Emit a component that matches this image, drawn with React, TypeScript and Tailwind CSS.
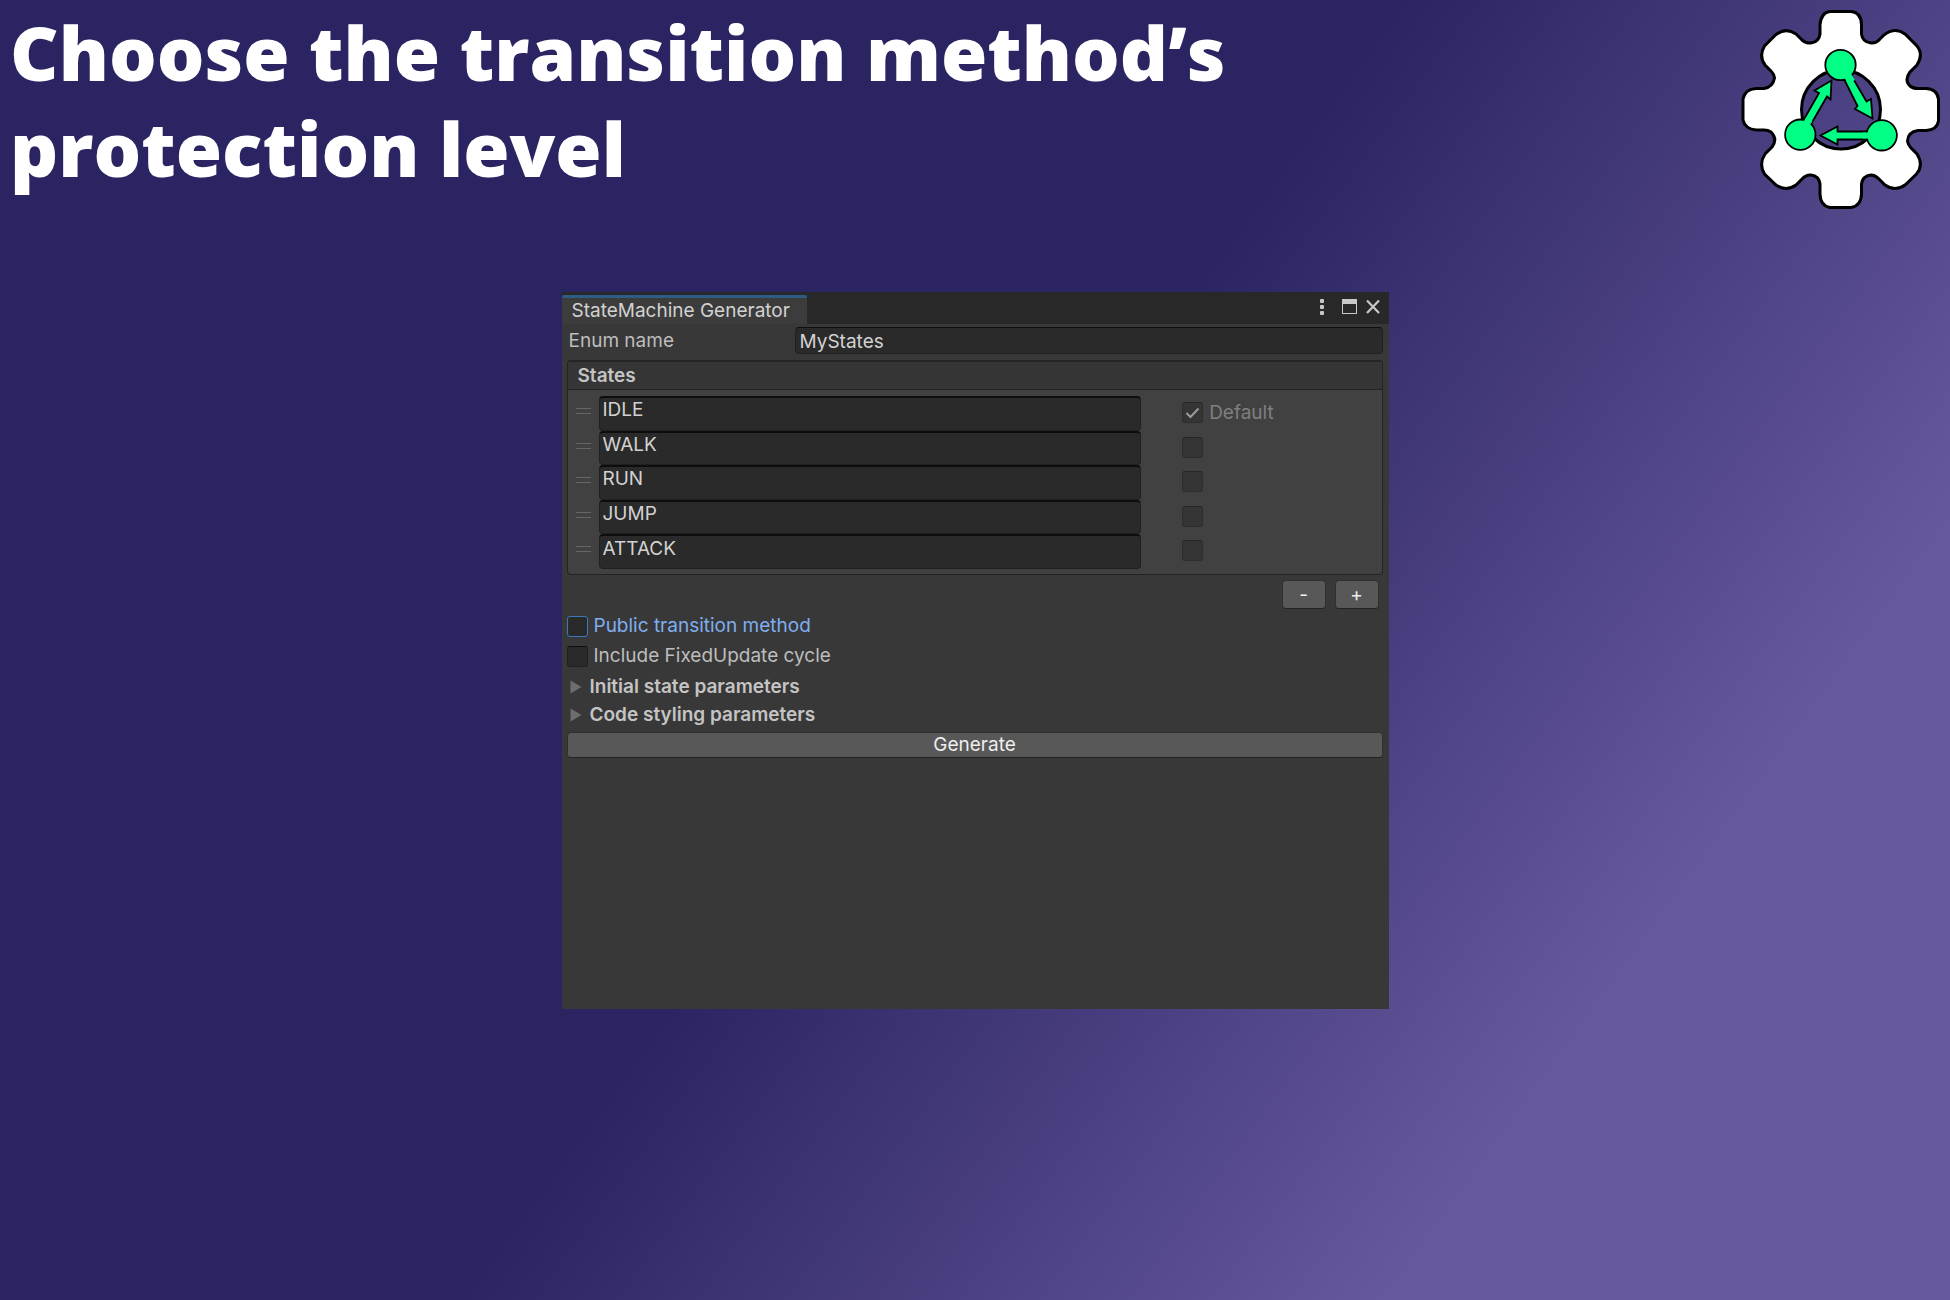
const STATES = ["IDLE", "WALK", "RUN", "JUMP", "ATTACK"];

function GearLogo() {
  return (
    <svg viewBox="0 0 220 220" className="h-[220px] w-[220px] shrink-0" aria-label="State machine gear logo" role="img">
      <path
        fill="#fff"
        stroke="#000"
        strokeWidth="3"
        fillRule="evenodd"
        d="M100 11.500H121Q131.500 12.500 131.500 25V34Q132.500 42 141 43Q146 43.500 150 39L154 35Q165 26.500 175 34L186.500 45.500Q194 54 187 65L180 72Q174 80 180 86Q183 88.500 188 88.500H196Q207 89 208.500 99V121Q207 130 196 130.500H188Q178 132 177.500 141Q178 145 181 148L187 154Q194 165 186.500 174L175 185Q165 192 155 185L149 179Q145 175 141 175Q132.500 176 131.500 184V194Q131 206 121 207.500H100Q90.500 206 90 194V184Q89 176 81 175Q76 174.500 72 179L66 185Q56 192 46 185L34.500 174Q28.500 164 35 154L42 147Q48 139 41 132Q38 130 34 130H26Q15 129 13 120V99Q15 89 26 88.500H34Q43 87 44.500 78Q44 74 41 71L35 65Q28.500 56 34.500 46L46 34.500Q56 27 66 34L72 40Q76 43.500 81 43Q89 42 90 34V25Q91 12.500 100 11.500ZM111 70A39.500 39.500 0 1 0 111 149A39.500 39.500 0 1 0 111 70Z"
      />
      <g fill="#00ff84" stroke="#000" strokeWidth="1.800" strokeLinejoin="miter">
        <path d="M114 79L127.500 106L125 109L142.500 118.500L141 99L136.500 101.500L121 75Z" />
        <path d="M80.500 125L97 96.500L100.500 99.500L101.500 80.500L84.500 90.500L89 93L73 121Z" />
        <path d="M140 131.500H107.500V126.500L90.500 135.500L107.500 144.500V139.500H140Z" />
        <circle cx="110.500" cy="65" r="15.200" />
        <circle cx="70.300" cy="134.700" r="15.200" />
        <circle cx="151.700" cy="135.300" r="15.200" />
        <path stroke="none" d="M113.500 76L120.500 73L125 80L118 84Z" />
        <path stroke="none" d="M72 124L76.500 117L82.500 121L78 128Z" />
        <path stroke="none" d="M133 132.500H141V138.500H133Z" />
      </g>
    </svg>
  );
}

function WindowButtons() {
  return (
    <div className="flex items-start gap-2 pt-[5px] pr-1.5">
      <button type="button" aria-label="Menu" className="flex size-5 items-center justify-center">
        <svg viewBox="0 0 20 20" className="size-5" fill="#c8c8c8">
          <rect x="9" y="2" width="4" height="4" rx="1" />
          <rect x="9" y="8" width="4" height="4" rx="1" />
          <rect x="9" y="14" width="4" height="4" rx="1" />
        </svg>
      </button>
      <button type="button" aria-label="Maximize" className="size-5">
        <svg viewBox="0 0 20 20" className="size-5" fill="#c8c8c8">
          <path fillRule="evenodd" d="M3 2H18V17H3ZM4 7V16H17V7Z" />
        </svg>
      </button>
      <button type="button" aria-label="Close" className="-ml-1 size-5">
        <svg viewBox="0 0 20 20" className="size-5" fill="none" stroke="#c8c8c8" strokeWidth="2.200">
          <path d="M4 3.500L16 16M16 3.500L4 16" />
        </svg>
      </button>
    </div>
  );
}

function DragHandle() {
  return (
    <span className="ml-2 mt-3 flex h-1.5 w-[15px] shrink-0 flex-col justify-between">
      <span className="h-px bg-[#666]" />
      <span className="h-px bg-[#666]" />
    </span>
  );
}

function StateRow({ name, isDefault }: { name: string; isDefault: boolean }) {
  return (
    <li className="flex items-start">
      <DragHandle />
      <input
        type="text"
        defaultValue={name}
        aria-label={`State ${name}`}
        className="ml-2 h-full w-2/3 rounded-[4px] border border-t-2 border-[#202020] border-t-[#0d0d0d] bg-[#2a2a2a] px-[3px] pb-2 text-[19px] leading-[22px] text-[#d2d2d2] outline-none"
      />
      <label className="ml-[41px] mt-1.5 flex items-center gap-1.5 text-[19px] leading-[21px] text-[#7f7f7f]">
        <span className="relative flex size-[21px]">
          <input
            type="checkbox"
            defaultChecked={isDefault}
            disabled
            aria-label={`${name} is default`}
            className="size-[21px] appearance-none rounded-[3px] border border-[#2e2e2e] border-t-[#262626] bg-[#353535]"
          />
          {isDefault && (
            <svg viewBox="0 0 21 21" className="pointer-events-none absolute inset-0" fill="none" stroke="#9a9a9a" strokeWidth="2">
              <path d="M4.500 11L8.500 15L16.500 6.500" />
            </svg>
          )}
        </span>
        {isDefault && "Default"}
      </label>
    </li>
  );
}

function Toggle({ label, focused }: { label: string; focused?: boolean }) {
  return (
    <label className={`flex h-[30px] items-center gap-1.5 text-[19px] ${focused ? "text-[#7faef0]" : "text-[#bdbdbd]"}`}>
      <input
        type="checkbox"
        className={`size-[21px] appearance-none rounded-[3px] border bg-[#2a2a2a] ${
          focused ? "border-[#3a79bb]" : "border-[#212121] border-t-[#0d0d0d]"
        }`}
      />
      {label}
    </label>
  );
}

function Foldout({ label }: { label: string }) {
  return (
    <button type="button" className="flex h-7 items-center gap-2 pl-[3px] text-[19px] font-semibold text-[#c4c4c4]">
      <svg viewBox="0 0 12 14" className="h-3.5 w-3" fill="#6e6e6e">
        <path d="M0.500 0.500L11.500 7L0.500 13.500Z" />
      </svg>
      {label}
    </button>
  );
}

const BUTTON =
  "rounded-[4px] border border-[#303030] border-b-[#242424] bg-[#585858] text-[19px] text-[#eee]";

function GeneratorWindow() {
  return (
    <section className="mx-auto flex min-h-[717px] w-full max-w-[827px] flex-col bg-[#383838]">
      <header className="flex h-8 justify-between bg-[#282828]">
        <h2 className="mt-[3px] flex w-[245px] items-center rounded-t-[2px] border-t-[3px] border-[#2c5d87] bg-[#3c3c3c] pl-2.5 text-[19px] leading-6 text-[#d2d2d2]">
          StateMachine Generator
        </h2>
        <WindowButtons />
      </header>

      <div className="flex flex-col pl-[5px] pr-1.5 pt-[3px]">
        <div className="flex items-center">
          <label htmlFor="enum-name" className="w-[228px] shrink-0 pl-0.5 text-[19px] leading-[27px] text-[#bdbdbd]">
            Enum name
          </label>
          <input
            id="enum-name"
            type="text"
            defaultValue="MyStates"
            className="h-[27px] min-w-0 flex-1 rounded-[4px] border border-[#212121] border-t-[#0d0d0d] bg-[#2a2a2a] px-1 pt-0.5 text-[19px] leading-[22px] text-[#d2d2d2] outline-none"
          />
        </div>

        <div className="mt-1.5 rounded-[4px] border border-t-2 border-[#242424] bg-[#414141]">
          <h3 className="border-b border-[#242424] bg-[#353535] pl-2.5 text-[19px] leading-[27px] font-semibold text-[#c4c4c4]">
            States
          </h3>
          <ul className="mb-[5px] mt-1.5 grid h-[173px] auto-rows-fr">
            {STATES.map((name, i) => (
              <StateRow key={name} name={name} isDefault={i === 0} />
            ))}
          </ul>
        </div>

        <div className="mt-[5px] flex justify-end gap-[9px] pr-1">
          <button type="button" aria-label="Remove state" className={`${BUTTON} h-[29px] w-11`}>
            -
          </button>
          <button type="button" aria-label="Add state" className={`${BUTTON} h-[29px] w-11`}>
            +
          </button>
        </div>

        <div className="mt-0.5 flex flex-col">
          <Toggle label="Public transition method" focused />
          <Toggle label="Include FixedUpdate cycle" />
        </div>
        <div className="mt-0.5 flex flex-col items-start">
          <Foldout label="Initial state parameters" />
          <Foldout label="Code styling parameters" />
        </div>
        <button type="button" className={`${BUTTON} mt-[3px] h-[26px] leading-6`}>
          Generate
        </button>
      </div>
    </section>
  );
}

export default function App() {
  return (
    <main className="min-h-screen bg-[linear-gradient(126deg,#2a2462_48%,#67599d_81%)] font-['Inter',sans-serif]">
      <div className="flex h-[292px] items-start justify-between">
        <h1 className="max-w-[1300px] pl-2.5 pt-1 font-['Open_Sans',sans-serif] text-[75px] leading-24 font-extrabold text-white">
          Choose the transition method’s protection level
        </h1>
        <GearLogo />
      </div>
      <GeneratorWindow />
    </main>
  );
}
